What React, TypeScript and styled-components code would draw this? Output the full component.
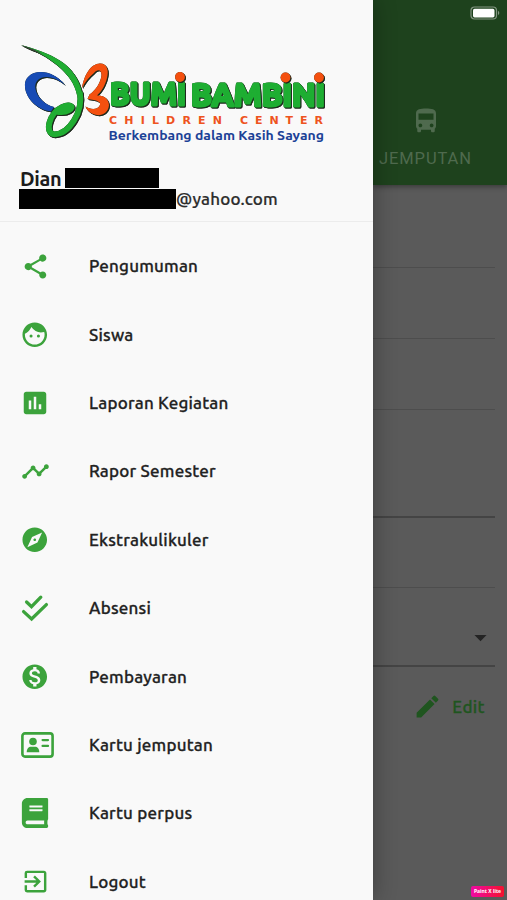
import React from "react";
import styled, { createGlobalStyle } from "styled-components";
import type { IconType } from "react-icons";
import {
  MdShare,
  MdFace,
  MdAssessment,
  MdTimeline,
  MdExplore,
  MdMonetizationOn,
  MdExitToApp,
  MdDirectionsBus,
  MdEdit,
  MdArrowDropDown,
} from "react-icons/md";
import { FaBook } from "react-icons/fa";

const GlobalStyle = createGlobalStyle`
  * { box-sizing: border-box; }
  body { margin: 0; background: #5a5a5a; overflow: hidden; }
`;

const GREEN = "#3ca33c";
const FONT = `Ubuntu, "Noto Sans", sans-serif`;

const Screen = styled.div`
  width: 507px;
  height: 900px;
  display: flex;
  overflow: hidden;
  background: #5a5a5a;
  font-family: ${FONT};
`;

const Drawer = styled.aside`
  width: 372.5px;
  height: 900px;
  flex: none;
  z-index: 1;
  overflow: hidden;
  background: #f9f9f9;
  box-shadow: 0 0 22px rgba(0, 0, 0, 0.32);
`;

const Account = styled.header`
  height: 222px;
  padding: 40px 0 0 19px;
  border-bottom: 1px solid #ececec;
`;

const AccountLine = styled.div<{ $height: number }>`
  display: flex;
  align-items: center;
  height: ${(p) => p.$height}px;
`;

const Redaction = styled.span<{ $width: number; $height: number }>`
  width: ${(p) => p.$width}px;
  height: ${(p) => p.$height}px;
  flex: none;
  background: #000;
`;

const Name = styled.strong`
  width: 46px;
  padding-left: 1px;
  font-size: 20px;
  font-weight: 700;
  letter-spacing: -0.35px;
  color: #1c1c1c;
`;

const Mail = styled.span`
  padding-bottom: 2px;
  font-size: 17px;
  font-weight: 500;
  letter-spacing: 0.18px;
  color: #2c2c2c;
  -webkit-text-stroke: 0.2px #2c2c2c;
`;

const Menu = styled.nav`
  display: flex;
  flex-direction: column;
  padding-top: 10px;
`;

const MenuItem = styled.a`
  display: flex;
  align-items: center;
  height: 68.4px;
  flex: none;
  color: #222;
`;

const IconSlot = styled.span<{ $left: number }>`
  display: flex;
  width: 89px;
  padding-left: ${(p) => p.$left}px;
  color: ${GREEN};
`;

const Label = styled.span`
  font-size: 17px;
  font-weight: 500;
  line-height: 24px;
  white-space: nowrap;
  letter-spacing: 0.2px;
  -webkit-text-stroke: 0.28px #222;
`;

const Page = styled.main`
  flex: 1;
  display: flex;
  flex-direction: column;
`;

const AppBar = styled.div`
  display: flex;
  flex-direction: column;
  height: 184.5px;
  flex: none;
  background: #1e421d;
  box-shadow: 0 2px 5px rgba(0, 0, 0, 0.35);
`;

const StatusBar = styled.div`
  display: flex;
  justify-content: flex-end;
  height: 106px;
  padding: 6px 6px 0 0;
`;

const Tab = styled.div`
  display: flex;
  flex-direction: column;
  align-items: center;
  width: 106px;
  color: #4f6a4e;
`;

const TabLabel = styled.span`
  margin-top: 13px;
  font: 400 16.5px/20px Roboto, sans-serif;
  letter-spacing: 0.9px;
`;

const Field = styled.div<{ $height: number; $strong?: boolean }>`
  display: flex;
  align-items: flex-end;
  justify-content: flex-end;
  height: ${(p) => p.$height}px;
  margin-right: 12px;
  padding-bottom: 13px;
  border-bottom: ${(p) => (p.$strong ? "2px solid #444" : "1px solid #4d4d4d")};
  color: #242424;
`;

const EditAction = styled.div`
  display: flex;
  align-items: center;
  justify-content: flex-end;
  gap: 10px;
  height: 28px;
  margin: 26px 22px 0 0;
  color: #1f551f;
  font-size: 17px;
  font-weight: 500;
  letter-spacing: 0.4px;
  -webkit-text-stroke: 0.28px #1f551f;
`;

const Watermark = styled.div`
  display: flex;
  align-items: center;
  justify-content: center;
  align-self: flex-end;
  width: 33px;
  height: 11px;
  margin: auto 3px 3px 0;
  border-radius: 2px;
  background: linear-gradient(90deg, #ee0aa4, #f5122d);
  color: #fff;
  font: 700 5px/11px "Noto Sans", sans-serif;
  white-space: nowrap;
`;

const LogoSvg = styled.svg`
  display: block;
  width: 320px;
  height: 127px;
`;

const LogoInk = styled.g`
  filter: drop-shadow(0.4px 0.4px 0.3px #1a2a1a) drop-shadow(1.5px 1.7px 0.3px #1d291d);
`;

const Wordmark = styled.g`
  font: 700 31.5px ${FONT};
  fill: #1eae32;
  stroke: #1eae32;
  stroke-width: 3px;
  stroke-linejoin: round;
`;

const Subtitle = styled.g`
  font: 700 11px "DejaVu Sans", sans-serif;
  fill: #ee5320;
`;

const Tagline = styled.text`
  font: 700 12.8px ${FONT};
  fill: #1c4297;
`;

const Logo = () => (
  <LogoSvg viewBox="19 40 320 127" role="img" aria-label="Bumi Bambini Children Center">
    <LogoInk>
      <path
        fill="#174bb5"
        d="M65 85C58 76 49 72 41 72C31 72 24 78 25 87C26 99 38 110 51 111.5L54 107C45 105 37 97 35.5 89C34 81 40 77 46 77C54 77 60 81 65 85Z"
      />
      <path
        fill="#f4500f"
        d="M82 88C84 75 91 63.500 100 63.500C107.500 63.500 109 71 107 78C105 86 101 92 97 95.5C104 95 109 99 109 105.500C108 114 100 117 93 114C89 112 86.500 109.500 85.500 106.500C90 109.500 97 110 99.500 106C102 102 97 100 87.500 99L89.500 94.500C96 90 101 82 101.500 75C101.500 69 97 69 94 73C89 77 85 82 82 88Z"
      />
      <path fill="#20ad32" d="M21 45C49 53 76 62 82.500 94L77 95C73 73 48 55 21 45Z" />
      <path
        fill="none"
        stroke="#20ad32"
        strokeWidth="5.8"
        strokeLinejoin="round"
        d="M79.800 92C83.500 112 69 134 54.500 134.300C44 134 49 113 62 107.200C70 103.500 75 107 69 110.200C66 112 61 112.600 56.500 111.600"
      />
      <path d="M21 45C31 48 38 51 43 54C36 52 28 49 21 45Z" fill="#3a4538" />
    </LogoInk>
    <LogoInk>
      <Wordmark>
        <text x="110" y="105.3" textLength="76" lengthAdjust="spacingAndGlyphs">BUMI</text>
        <text x="191" y="106" textLength="134" lengthAdjust="spacingAndGlyphs">BAMBINI</text>
      </Wordmark>
    </LogoInk>
    <LogoInk>
      <circle cx="180" cy="77" r="4.900" fill="#f4500f" />
      <circle cx="285.500" cy="77.500" r="4.900" fill="#f4500f" />
      <circle cx="319" cy="77.500" r="4.900" fill="#f4500f" />
    </LogoInk>
    <Subtitle>
      <text x="109" y="124.4" textLength="113">CHILDREN</text>
      <text x="240" y="124.4" textLength="83">CENTER</text>
    </Subtitle>
    <Tagline x="108.500" y="140.400" textLength="215.500" lengthAdjust="spacingAndGlyphs">
      Berkembang dalam Kasih Sayang
    </Tagline>
  </LogoSvg>
);

const DoubleCheck = () => (
  <svg
    width="28"
    height="28"
    viewBox="0 0 28 28"
    fill="none"
    stroke="currentColor"
    strokeWidth="3.3"
    strokeLinecap="round"
  >
    <path d="M5.600 8L10.500 12.600L19.800 3.200M2.600 17.600L10.600 25L25.400 10.600" />
  </svg>
);

const ContactCard = () => (
  <svg width="33" height="26" viewBox="0 0 33 26" fill="currentColor">
    <rect x="1.400" y="1.400" width="30.200" height="23.200" rx="2.600" fill="none" stroke="currentColor" strokeWidth="2.600" />
    <circle cx="12" cy="9.500" r="3.800" />
    <path d="M5.700 20.200C5.700 16.500 7.800 14.700 10 14.700H14C16.200 14.700 18.300 16.500 18.300 20.200Z" />
    <path d="M21.600 8.100H27M21.600 13.900H27" stroke="currentColor" strokeWidth="2.300" strokeLinecap="round" />
  </svg>
);

const Battery = () => (
  <svg width="31" height="15" viewBox="0 0 31 15">
    <rect x="1" y="1" width="25.500" height="12" rx="3.500" fill="none" stroke="#839582" strokeWidth="1.200" />
    <rect x="3" y="2.800" width="21.500" height="8.600" rx="1.600" fill="#fff" />
    <path d="M28 4.800Q30.600 7 28 9.300Z" fill="#839582" />
  </svg>
);

const glyph = (Icon: IconType, size: number) => <Icon size={size} />;

const items = [
  { label: "Pengumuman", icon: glyph(MdShare, 29), left: 20.5 },
  { label: "Siswa", icon: glyph(MdFace, 29.5), left: 20.2 },
  { label: "Laporan Kegiatan", icon: glyph(MdAssessment, 30), left: 20 },
  { label: "Rapor Semester", icon: glyph(MdTimeline, 29), left: 20.5 },
  { label: "Ekstrakulikuler", icon: glyph(MdExplore, 29.5), left: 20.2 },
  { label: "Absensi", icon: <DoubleCheck />, left: 21 },
  { label: "Pembayaran", icon: glyph(MdMonetizationOn, 29.5), left: 20.2 },
  { label: "Kartu jemputan", icon: <ContactCard />, left: 20.5 },
  { label: "Kartu perpus", icon: glyph(FaBook, 30), left: 20.3 },
  { label: "Logout", icon: glyph(MdExitToApp, 29), left: 20.5 },
];

export default function App() {
  return (
    <>
      <GlobalStyle />
      <Screen>
        <Drawer>
          <Account>
            <Logo />
            <AccountLine $height={22}>
              <Name>Dian</Name>
              <Redaction $width={94} $height={20} />
            </AccountLine>
            <AccountLine $height={20}>
              <Redaction $width={157} $height={20} />
              <Mail>@yahoo.com</Mail>
            </AccountLine>
          </Account>
          <Menu>
            {items.map((item) => (
              <MenuItem key={item.label}>
                <IconSlot $left={item.left}>{item.icon}</IconSlot>
                <Label>{item.label}</Label>
              </MenuItem>
            ))}
          </Menu>
        </Drawer>
        <Page>
          <AppBar>
            <StatusBar>
              <Battery />
            </StatusBar>
            <Tab>
              <MdDirectionsBus size={30} />
              <TabLabel>JEMPUTAN</TabLabel>
            </Tab>
          </AppBar>
          <Field $height={83} />
          <Field $height={71} />
          <Field $height={71} />
          <Field $height={108} $strong />
          <Field $height={70} />
          <Field $height={79} $strong>
            <MdArrowDropDown size={29} />
          </Field>
          <EditAction>
            <MdEdit size={29} />
            Edit
          </EditAction>
          <Watermark>Paint X lite</Watermark>
        </Page>
      </Screen>
    </>
  );
}
